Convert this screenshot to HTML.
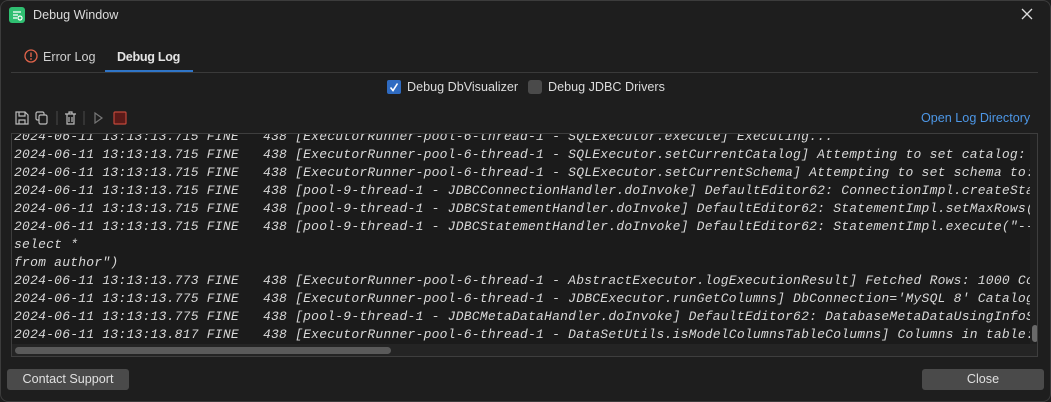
<!DOCTYPE html>
<html><head><style>
*{margin:0;padding:0;box-sizing:border-box}
body{width:1051px;height:402px;background:#1e1e1e;font-family:"Liberation Sans",sans-serif;color:#dcdcdc;position:relative;overflow:hidden;font-size:12.6px}
.win{position:absolute;left:0;top:0;width:1051px;height:402px;border:1px solid #3c3c3c;border-radius:8px;background:#1e1e1e}
.abs{position:absolute}
.log{position:absolute;left:11px;top:133px;width:1027px;height:224px;border:1px solid #3e3e3e;background:#1b1b1b;overflow:hidden}
.lines{position:absolute;left:2px;top:-6px;font-family:"Liberation Mono",monospace;font-style:italic;font-size:13px;letter-spacing:0.23px;line-height:18px;color:#d8d8d8;white-space:pre}
.btn{position:absolute;background:#4a4a4a;border-radius:3px;color:#e0e0e0;font-size:12.6px;text-align:center;line-height:21px;height:21px}
</style></head><body>
<div class="win"></div>
<div class="abs" style="left:9px;top:7px;width:16px;height:16px;background:#2fbf71;border-radius:3px"></div>
<svg class="abs" style="left:9px;top:7px" width="16" height="16"><path d="M4 5h8M4 8h5M4 11h4" stroke="#fff" stroke-width="1.3"/><circle cx="11" cy="11" r="2" stroke="#fff" fill="none" stroke-width="1.2"/></svg>
<div class="abs" style="left:33px;top:8px;color:#dcdcdc">Debug Window</div>
<svg class="abs" style="left:1021px;top:8px" width="12" height="12"><path d="M1 1L11 11M11 1L1 11" stroke="#ddd" stroke-width="1.3"/></svg>
<div class="abs" style="left:11px;top:72px;width:1027px;height:1px;background:#3a3a3a"></div>
<svg class="abs" style="left:24px;top:49px" width="14" height="14"><circle cx="7" cy="7" r="6" stroke="#e0634a" fill="none" stroke-width="1.3"/><path d="M7 3.5v4.5" stroke="#e0634a" stroke-width="1.4"/><circle cx="7" cy="10" r="0.9" fill="#e0634a"/></svg>
<div class="abs" style="left:43px;top:50px;color:#d0d0d0">Error Log</div>
<div class="abs" style="left:117px;top:50px;font-weight:bold;color:#e4e4e4;letter-spacing:-0.3px">Debug Log</div>
<div class="abs" style="left:105px;top:70px;width:88px;height:2px;background:#2f75c8"></div>
<div class="abs" style="left:387px;top:80px;width:14px;height:14px;background:#2f6bc1;border-radius:2px"></div>
<svg class="abs" style="left:387px;top:80px" width="14" height="14"><path d="M3.5 7.5l2.5 3 4.5-7" stroke="#fff" stroke-width="1.6" fill="none"/></svg>
<div class="abs" style="left:407px;top:80px">Debug DbVisualizer</div>
<div class="abs" style="left:528px;top:80px;width:14px;height:14px;background:#4a4a4a;border-radius:3px"></div>
<div class="abs" style="left:548px;top:80px">Debug JDBC Drivers</div>
<svg class="abs" style="left:14px;top:110px" width="120" height="16" fill="none" stroke="#bbb" stroke-width="1.2">
<path d="M2 2h9l3 3v9H2z M5 2v4h6V2 M5 14v-4h6v4"/>
<rect x="22" y="2" width="8" height="8" rx="1.5"/><rect x="25" y="5" width="8" height="9" rx="1.5" fill="#1e1e1e"/>
<path d="M43 1v14" stroke="#444"/>
<path d="M51 4h11M55 4V2h3v2M53 4v10h7V4M55 7v5M58 7v5"/>
<path d="M70 1v14" stroke="#444"/>
<path d="M81 3l7 5-7 5z" stroke="#777"/>
<rect x="100" y="2" width="12" height="12" rx="1" fill="#5a1a18" stroke="#c0473a"/>
</svg>
<div class="abs" style="left:921px;top:111px;color:#4d97e6">Open Log Directory</div>
<div class="log">
<div class="lines">2024-06-11 13:13:13.715 FINE   438 [ExecutorRunner-pool-6-thread-1 - SQLExecutor.execute] Executing...
2024-06-11 13:13:13.715 FINE   438 [ExecutorRunner-pool-6-thread-1 - SQLExecutor.setCurrentCatalog] Attempting to set catalog: 
2024-06-11 13:13:13.715 FINE   438 [ExecutorRunner-pool-6-thread-1 - SQLExecutor.setCurrentSchema] Attempting to set schema to:
2024-06-11 13:13:13.715 FINE   438 [pool-9-thread-1 - JDBCConnectionHandler.doInvoke] DefaultEditor62: ConnectionImpl.createSta
2024-06-11 13:13:13.715 FINE   438 [pool-9-thread-1 - JDBCStatementHandler.doInvoke] DefaultEditor62: StatementImpl.setMaxRows(
2024-06-11 13:13:13.715 FINE   438 [pool-9-thread-1 - JDBCStatementHandler.doInvoke] DefaultEditor62: StatementImpl.execute("--
select *
from author")
2024-06-11 13:13:13.773 FINE   438 [ExecutorRunner-pool-6-thread-1 - AbstractExecutor.logExecutionResult] Fetched Rows: 1000 Co
2024-06-11 13:13:13.775 FINE   438 [ExecutorRunner-pool-6-thread-1 - JDBCExecutor.runGetColumns] DbConnection='MySQL 8' Catalog
2024-06-11 13:13:13.775 FINE   438 [pool-9-thread-1 - JDBCMetaDataHandler.doInvoke] DefaultEditor62: DatabaseMetaDataUsingInfoS
2024-06-11 13:13:13.817 FINE   438 [ExecutorRunner-pool-6-thread-1 - DataSetUtils.isModelColumnsTableColumns] Columns in table:
2024-06-11 13:13:13.817 FINE   438 [ExecutorRunner-pool-6-thread-1 - DataSetUtils.isModelColumnsTableColumns] Columns in table:</div>
<div class="abs" style="left:0;top:210px;width:1025px;height:13px;background:#242424"></div>
<div class="abs" style="left:3px;top:213px;width:376px;height:7px;background:#5a5a5a;border-radius:4px"></div>
<div class="abs" style="left:1018px;top:0;width:9px;height:210px;background:#1f1f1f"></div>
<div class="abs" style="left:1020px;top:191px;width:6px;height:17px;background:#6a6a6a;border-radius:3px"></div>
</div>
<div class="btn" style="left:7px;top:369px;width:122px">Contact Support</div>
<div class="btn" style="left:922px;top:369px;width:122px">Close</div>
</body></html>
